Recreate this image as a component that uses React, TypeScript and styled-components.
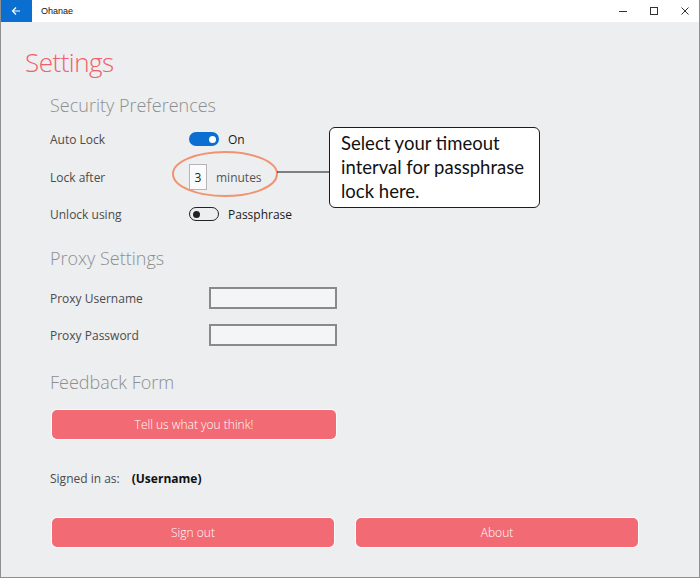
import React, { ReactElement } from 'react'
import styled, { createGlobalStyle } from 'styled-components'

const GlobalStyle = createGlobalStyle`
  html, body {
    margin: 0;
    padding: 0;
    background: #ffffff;
  }
  body {
    font-family: 'Open Sans', 'Noto Sans', sans-serif;
  }
`

const palette = {
  coral: '#f26a73',
  title: '#f0606b',
  heading: '#8e8e8e',
  label: '#4b4b4b',
  body: '#eceef0',
  blue: '#0b6fd2',
}

const Window = styled.div`
  position: relative;
  width: 700px;
  height: 578px;
  box-sizing: border-box;
  border: 1px solid #8f8f8f;
  border-top: none;
  background: ${palette.body};
  display: flex;
  flex-direction: column;
  overflow: hidden;
`

const TitleBar = styled.div`
  display: flex;
  align-items: center;
  height: 22px;
  background: #ffffff;
  margin-left: -1px;
  margin-right: -1px;
`

const BackButton = styled.div`
  width: 32px;
  height: 22px;
  background: ${palette.blue};
  display: flex;
  align-items: center;
  justify-content: center;
`

const AppName = styled.span`
  margin-left: 9px;
  font-family: 'Liberation Sans', sans-serif;
  font-size: 9px;
  color: #111;
  flex: 1;
`

const Caption = styled.div`
  width: 31px;
  height: 22px;
  display: flex;
  align-items: center;
  justify-content: center;
`

const Content = styled.div`
  padding: 14px 0 0 24px;
  display: flex;
  flex-direction: column;
`

const PageTitle = styled.h1`
  margin: 0;
  font-weight: 300;
  font-size: 26px;
  letter-spacing: -0.5px;
  line-height: 52px;
  height: 52px;
  color: ${palette.title};
`

const Section = styled.div`
  padding-left: 25px;
  display: flex;
  flex-direction: column;
`

const Heading = styled.h2<{ $top: number }>`
  margin: ${(p) => p.$top}px 0 0 0;
  font-weight: 300;
  font-size: 18px;
  line-height: 30px;
  height: 30px;
  color: ${palette.heading};
`

const Row = styled.div<{ $h: number; $top?: number }>`
  display: grid;
  grid-template-columns: 139px auto;
  align-items: center;
  height: ${(p) => p.$h}px;
  margin-top: ${(p) => p.$top ?? 0}px;
`

const Label = styled.span`
  font-size: 12px;
  color: ${palette.label};
`

const Control = styled.div`
  display: flex;
  align-items: center;
  gap: 9px;
  font-size: 12px;
  color: #1a1a1a;
`

const Track = styled.div<{ $on: boolean }>`
  width: 30px;
  height: 14px;
  box-sizing: border-box;
  border-radius: 8px;
  border: ${(p) => (p.$on ? 'none' : '1.5px solid #222')};
  background: ${(p) => (p.$on ? palette.blue : 'transparent')};
  display: flex;
  align-items: center;
  justify-content: ${(p) => (p.$on ? 'flex-end' : 'flex-start')};
  padding: 0 3px;
`

const Knob = styled.div<{ $on: boolean }>`
  width: 7px;
  height: 7px;
  border-radius: 50%;
  background: ${(p) => (p.$on ? '#fff' : '#222')};
`

const NumberBox = styled.div`
  width: 18px;
  height: 26px;
  box-sizing: border-box;
  border: 1px solid #b5b5b5;
  background: #fbfbfb;
  display: flex;
  align-items: center;
  justify-content: center;
  font-size: 12px;
  color: #222;
`

const Unit = styled.span`
  font-size: 12px;
  color: #555;
`

const TextInput = styled.div`
  width: 128px;
  height: 22px;
  box-sizing: border-box;
  border: 2px solid #8a8a8a;
  background: #f4f5f7;
  margin-left: 20px;
`

const PinkButton = styled.div<{ $w: number; $top: number }>`
  width: ${(p) => p.$w}px;
  height: 29px;
  margin-top: ${(p) => p.$top}px;
  border-radius: 5px;
  background: ${palette.coral};
  box-shadow: 0 0 0 1px #fbfbfb;
  color: #fff;
  font-size: 12px;
  font-weight: 300;
  display: flex;
  align-items: center;
  justify-content: center;
`

const SignedRow = styled.div`
  display: flex;
  align-items: center;
  height: 30px;
  margin-top: 24px;
  gap: 12px;
`

const UserName = styled.span`
  font-size: 12px;
  font-weight: 700;
  color: #111;
`

const ButtonRow = styled.div`
  display: flex;
  gap: 22px;
  margin-left: 2px;
`

const Highlight = styled.svg`
  position: absolute;
  left: 170px;
  top: 150px;
`

const Callout = styled.div`
  position: absolute;
  left: 328px;
  top: 127px;
  width: 211px;
  height: 81px;
  box-sizing: border-box;
  border: 1.5px solid #1c1c1c;
  border-radius: 6px;
  background: #fff;
  padding: 3px 0 0 11px;
  font-family: 'Lato', 'Open Sans', sans-serif;
  font-size: 18.5px;
  line-height: 24px;
  color: #111;
`

const Toggle = ({ on, text }: { on: boolean; text: string }): ReactElement => (
  <Control>
    <Track $on={on}>
      <Knob $on={on} />
    </Track>
    <span>{text}</span>
  </Control>
)

export default function App(): ReactElement {
  return (
    <>
      <GlobalStyle />
      <Window>
        <TitleBar>
          <BackButton>
            <svg width="10" height="10" viewBox="0 0 10 10">
              <path d="M9 5H1.5M5 1.5L1.5 5L5 8.5" stroke="#fff" strokeWidth="1.2" fill="none" />
            </svg>
          </BackButton>
          <AppName>Ohanae</AppName>
          <Caption>
            <svg width="10" height="10" viewBox="0 0 10 10">
              <path d="M1 5.5H9" stroke="#333" strokeWidth="1" />
            </svg>
          </Caption>
          <Caption>
            <svg width="10" height="10" viewBox="0 0 10 10">
              <rect x="1.5" y="1.5" width="7" height="7" stroke="#333" strokeWidth="1" fill="none" />
            </svg>
          </Caption>
          <Caption>
            <svg width="10" height="10" viewBox="0 0 10 10">
              <path d="M1.5 1.5L8.5 8.5M8.5 1.5L1.5 8.5" stroke="#333" strokeWidth="1" />
            </svg>
          </Caption>
        </TitleBar>

        <Content>
          <PageTitle>Settings</PageTitle>
          <Section>
            <Heading $top={2}>Security Preferences</Heading>
            <Row $h={38}>
              <Label>Auto Lock</Label>
              <Toggle on text="On" />
            </Row>
            <Row $h={38}>
              <Label>Lock after</Label>
              <Control>
                <NumberBox>3</NumberBox>
                <Unit>minutes</Unit>
              </Control>
            </Row>
            <Row $h={36}>
              <Label>Unlock using</Label>
              <Toggle on={false} text="Passphrase" />
            </Row>

            <Heading $top={11}>Proxy Settings</Heading>
            <Row $h={38} $top={6}>
              <Label>Proxy Username</Label>
              <TextInput />
            </Row>
            <Row $h={36}>
              <Label>Proxy Password</Label>
              <TextInput />
            </Row>

            <Heading $top={14}>Feedback Form</Heading>
            <PinkButton $w={284} $top={13} style={{ marginLeft: 2 }}>
              Tell us what you think!
            </PinkButton>

            <SignedRow>
              <Label>Signed in as:</Label>
              <UserName>(Username)</UserName>
            </SignedRow>

            <ButtonRow>
              <PinkButton $w={282} $top={25}>Sign out</PinkButton>
              <PinkButton $w={282} $top={25}>About</PinkButton>
            </ButtonRow>
          </Section>
        </Content>

        <Highlight width="160" height="52" viewBox="0 0 160 52">
          <ellipse cx="54" cy="24" rx="52" ry="22" stroke="#f2926f" strokeWidth="2" fill="none" />
          <line x1="106" y1="22" x2="158" y2="22" stroke="#111" strokeWidth="1" />
        </Highlight>
        <Callout>
          Select your timeout
          <br />
          interval for passphrase
          <br />
          lock here.
        </Callout>
      </Window>
    </>
  )
}
